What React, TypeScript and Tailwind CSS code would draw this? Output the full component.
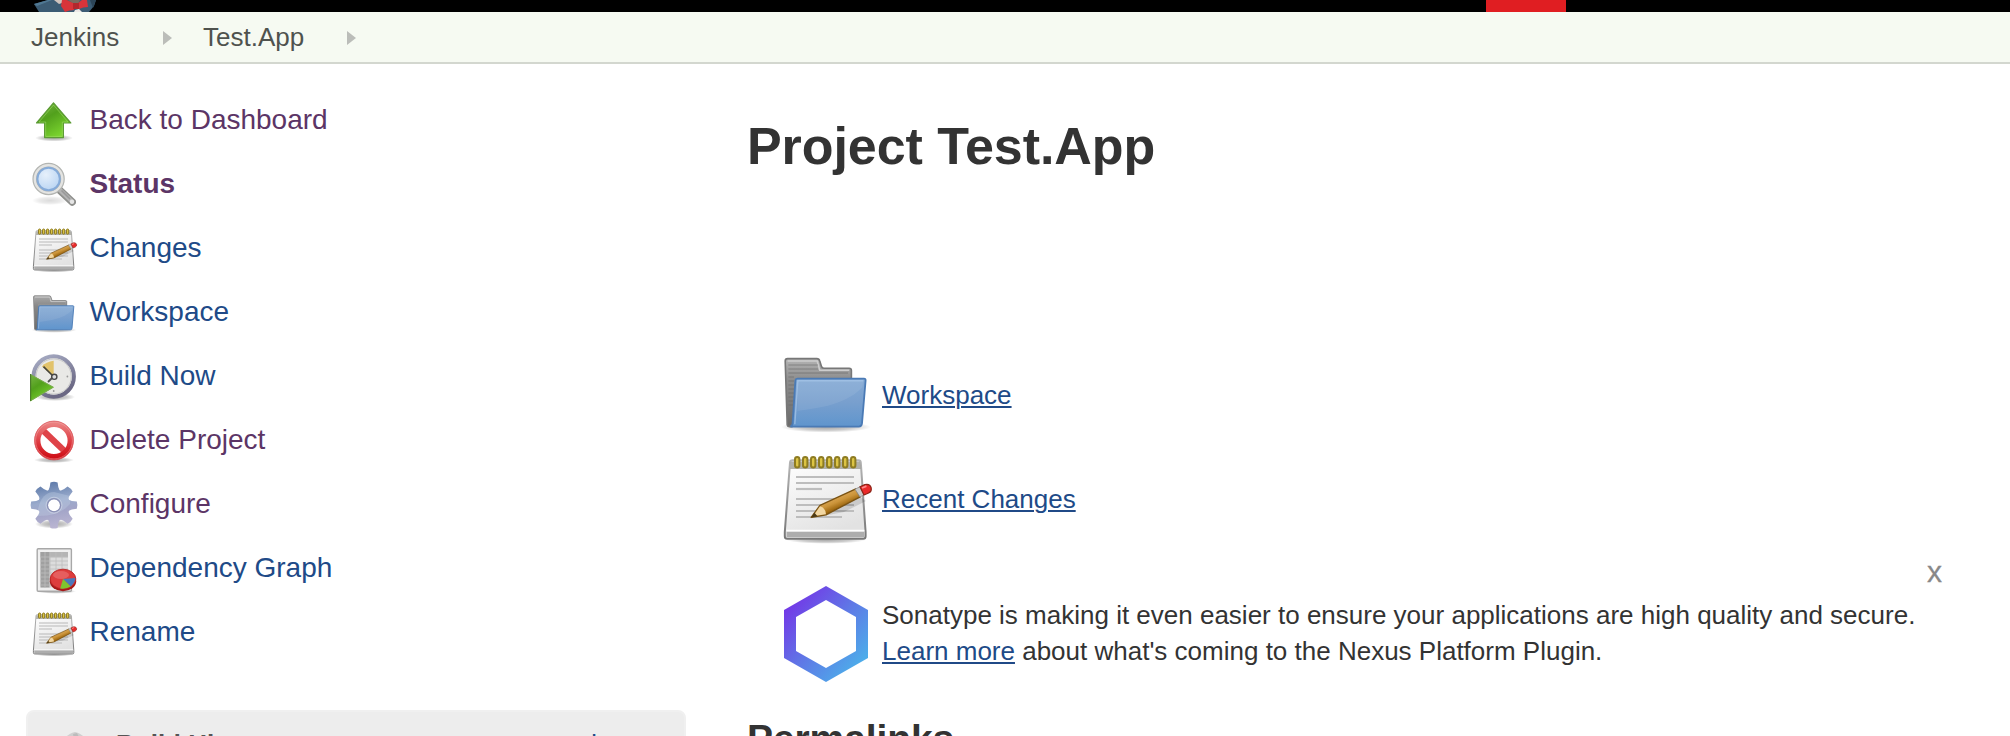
import type { ComponentType, ReactNode } from "react";

type IconProps = { className?: string };

function Svg({ className = "size-12", children }: { className?: string; children: ReactNode }) {
  return (
    <svg viewBox="0 0 48 48" className={`block shrink-0 overflow-visible ${className}`} fill="none">
      {children}
    </svg>
  );
}

function Gradients() {
  return (
    <svg width="0" height="0" className="absolute">
      <defs>
        <radialGradient id="shadow">
          <stop offset="0" stopColor="#000" stopOpacity="0.35" />
          <stop offset="0.6" stopColor="#000" stopOpacity="0.2" />
          <stop offset="1" stopColor="#000" stopOpacity="0" />
        </radialGradient>
        <linearGradient id="green" x1="0" y1="0" x2="0.6" y2="1">
          <stop offset="0" stopColor="#7ab648" />
          <stop offset="0.45" stopColor="#52a01c" />
          <stop offset="1" stopColor="#7bd52f" />
        </linearGradient>
        <linearGradient id="paper" x1="0" y1="0" x2="0.4" y2="1">
          <stop offset="0" stopColor="#fff" />
          <stop offset="1" stopColor="#e2e2e2" />
        </linearGradient>
        <linearGradient id="paperEdge" x1="0" y1="0" x2="0" y2="1">
          <stop offset="0" stopColor="#b5b5b5" />
          <stop offset="1" stopColor="#777" />
        </linearGradient>
        <linearGradient id="folderBack" x1="0" y1="0" x2="0" y2="1">
          <stop offset="0" stopColor="#b4b4b4" />
          <stop offset="0.3" stopColor="#8e8e8e" />
          <stop offset="1" stopColor="#6b6b6b" />
        </linearGradient>
        <linearGradient id="folderFront" x1="0" y1="0" x2="0" y2="1">
          <stop offset="0" stopColor="#86abd5" />
          <stop offset="0.5" stopColor="#789fce" />
          <stop offset="1" stopColor="#5f95cd" />
        </linearGradient>
        <radialGradient id="lens" cx="0.4" cy="0.35" r="0.7">
          <stop offset="0" stopColor="#e6f0fb" />
          <stop offset="1" stopColor="#b3d0f1" />
        </radialGradient>
        <linearGradient id="red" x1="0" y1="0" x2="0" y2="1">
          <stop offset="0" stopColor="#ea8080" />
          <stop offset="0.55" stopColor="#de3a40" />
          <stop offset="1" stopColor="#cf1018" />
        </linearGradient>
        <linearGradient id="gear" x1="0.4" y1="0" x2="0.6" y2="1">
          <stop offset="0" stopColor="#5b78a8" />
          <stop offset="0.4" stopColor="#9aabcc" />
          <stop offset="0.62" stopColor="#a3a5c8" />
          <stop offset="1" stopColor="#c0b9d4" />
        </linearGradient>
        <linearGradient id="clockRim" x1="0" y1="0" x2="0.5" y2="1">
          <stop offset="0" stopColor="#a9aec6" />
          <stop offset="1" stopColor="#6b6884" />
        </linearGradient>
        <linearGradient id="hex" x1="0.1" y1="0.1" x2="0.9" y2="0.9">
          <stop offset="0" stopColor="#7434e7" />
          <stop offset="0.5" stopColor="#5f78e6" />
          <stop offset="1" stopColor="#4bb2ea" />
        </linearGradient>
        <linearGradient id="pencil" gradientUnits="userSpaceOnUse" x1="28" y1="22" x2="31" y2="29">
          <stop offset="0" stopColor="#e0ac5c" />
          <stop offset="0.5" stopColor="#cb943a" />
          <stop offset="1" stopColor="#8f5902" />
        </linearGradient>
      </defs>
    </svg>
  );
}

function UpIcon({ className }: IconProps) {
  return (
    <Svg className={className}>
      <ellipse cx="24" cy="40" rx="19" ry="3.5" fill="url(#shadow)" />
      <path d="M23.5 4.8 L40.8 25 H33.4 V39.6 H14.6 V25 H6.5 Z" fill="url(#green)" stroke="#5c9b35" strokeWidth="1.2" strokeLinejoin="round" />
      <path d="M23.5 7 L38 24 H32.3 V38.4 H15.7 V24 H9 Z" stroke="#a5e070" strokeOpacity="0.5" strokeWidth="1" />
    </Svg>
  );
}

function SearchIcon({ className }: IconProps) {
  return (
    <Svg className={className}>
      <ellipse cx="20" cy="38.5" rx="18" ry="4.5" fill="url(#shadow)" opacity="0.4" />
      <path d="M30 28.5 L42.3 40" stroke="#8f908d" strokeWidth="7.4" strokeLinecap="round" />
      <path d="M30.5 28.7 L42 39.5" stroke="#b4b4b4" strokeWidth="4.4" strokeLinecap="round" />
      <path d="M31.5 28.5 L40 37" stroke="#999" strokeWidth="1.6" />
      <circle cx="42" cy="39.8" r="2.2" fill="#e6e6e6" />
      <circle cx="18.6" cy="17" r="13.8" fill="url(#lens)" stroke="#b3b5b2" strokeWidth="4.8" />
      <circle cx="18.6" cy="17" r="13.8" stroke="#e4e4e2" strokeWidth="2.4" />
      <circle cx="18.6" cy="17" r="11.2" stroke="#86abd9" strokeWidth="2" />
    </Svg>
  );
}

const RINGS = [9.5, 13.5, 17.5, 21.5, 25.5, 29.5, 33.5, 37.5];
const RULES: [number, number][] = [[13, 38], [16, 38], [19, 22], [24, 38], [27, 38], [30, 38], [33, 32]];

function NotepadIcon({ className }: IconProps) {
  return (
    <Svg className={className}>
      <ellipse cx="24" cy="44.4" rx="20" ry="2" fill="url(#shadow)" />
      <path d="M7.2 4.6 H40.2 Q41.3 4.6 41.4 5.8 L43.8 40.5 V42.6 Q43.8 43.9 42.6 43.9 H4.6 Q3.4 43.9 3.4 42.6 V40.5 L6 5.8 Q6.1 4.6 7.2 4.6 Z" fill="url(#paper)" stroke="url(#paperEdge)" strokeWidth="1" />
      <path d="M6.4 5.2 H41 L41.4 9 H6.1 Z" fill="#9a9a90" fillOpacity="0.75" />
      <path d="M4.3 40.2 H43 V43 H4.3 Z" fill="#adadad" />
      <path d="M4.2 39.8 H43.2" stroke="#fff" strokeWidth="0.8" />
      {RULES.map(([y, x]) => (
        <path key={y} d={`M9 ${y} H${x}`} stroke="#bdbdbd" strokeWidth="1.1" />
      ))}
      {RINGS.map((x) => (
        <rect key={x} x={x - 1} y="3" width="2.2" height="5.2" rx="1.1" fill="#dcc444" stroke="#8e7c22" strokeWidth="1" />
      ))}
      <path d="M16 33.8 L33 30.5 L44 25 L40 22 Z" fill="#000" opacity="0.13" />
      <path d="M16.6 33.2 L21 27.2 L38.9 18.9 L41.1 22.9 L24 31.9 Z" fill="url(#pencil)" stroke="#7a5313" strokeWidth="0.7" strokeLinejoin="round" />
      <path d="M17.6 32.6 L21 27.6 Q23.6 28.2 24 31.6 Z" fill="#f2d7a2" />
      <path d="M16.6 33.2 L18.2 30.9 L19.8 32.6 Z" fill="#4b3a17" />
      <path d="M38.5 19.1 L41 17.9 L43 21.9 L41 23 Z" fill="#c9c9c9" stroke="#8c8c8c" strokeWidth="0.4" />
      <path d="M41 17.9 L43.4 16.8 Q46 16.2 46.6 18.5 Q46.9 20.3 45.3 21 L43 22 Z" fill="#ea2a2a" stroke="#8d2417" strokeWidth="0.6" />
      <path d="M42 18.5 L44.2 17.6" stroke="#ff8a8a" strokeWidth="0.9" />
    </Svg>
  );
}

function FolderIcon({ className }: IconProps) {
  return (
    <Svg className={className}>
      <ellipse cx="24" cy="40" rx="22.5" ry="2.8" fill="url(#shadow)" />
      <path d="M3.6 7 Q3.6 5.8 4.8 5.8 H19.4 Q20.6 5.8 20.9 7 L21.7 9.6 Q22 10.6 23 10.6 H35.6 Q36.7 10.6 36.7 11.7 V20 L7 39.8 H5.6 Q4.7 39.8 4.6 39 Z" fill="url(#folderBack)" stroke="#777" strokeWidth="0.8" />
      <path d="M4.8 7 H19.6 L20.9 11.6 H35.6" stroke="#cdcdcd" strokeWidth="0.8" />
      {[9, 11, 13, 15, 17, 19, 21, 23, 25, 27, 29].map((y) => (
        <path key={y} d={`M5.2 ${y} H${y < 12 ? 20 : y < 15 ? 35 : 8}`} stroke="#666" strokeOpacity="0.4" strokeWidth="0.7" />
      ))}
      <path d="M9.6 15.8 H43 Q43.9 15.8 43.8 16.7 L42 38.2 Q41.8 39.8 40.4 39.8 H6.2 Q7.2 39.4 7.3 38.2 L8.7 16.7 Q8.8 15.8 9.6 15.8 Z" fill="url(#folderFront)" stroke="#4a7ab5" strokeWidth="0.9" />
      <path d="M9.7 32 Q16 31.2 22 30 Q36 27 42.2 20 L42.6 17 H9.9 Z" fill="#fff" fillOpacity="0.08" />
      <path d="M8.4 38.6 L9.9 16.9 H42.7" stroke="#a9c8ea" strokeOpacity="0.7" strokeWidth="0.7" />
    </Svg>
  );
}

function BuildIcon({ className }: IconProps) {
  return (
    <Svg className={className}>
      <ellipse cx="25" cy="43" rx="20" ry="4" fill="url(#shadow)" />
      <circle cx="23.7" cy="22.5" r="20.2" fill="#e9e9e6" stroke="url(#clockRim)" strokeWidth="4" />
      <circle cx="23.7" cy="22.5" r="17.6" stroke="#c9c9c9" strokeWidth="1" />
      <path d="M23.7 22.5 L11.8 12.4 Q16 7.8 23.7 6.8 Z" fill="#e2c36b" />
      <path d="M24 23 L13.5 12.6" stroke="#45443a" strokeWidth="1.6" />
      <path d="M24 22 L18 28" stroke="#555" strokeWidth="1.8" />
      <circle cx="24.3" cy="22.8" r="2.6" fill="#ddd" stroke="#484848" strokeWidth="1.4" />
      <circle cx="37.4" cy="22.5" r="0.9" fill="#999" />
      <circle cx="23.7" cy="37" r="0.9" fill="#999" />
      <path d="M0.2 20 L24 33.2 L0.2 47.4 Z" fill="url(#green)" />
      <path d="M0.5 20.5 L23.2 33.2 L0.5 46.6" stroke="#7cab52" strokeWidth="1" />
      <path d="M0.6 20 V47" stroke="#4b7c2b" strokeWidth="1.2" />
    </Svg>
  );
}

function DeleteIcon({ className }: IconProps) {
  return (
    <Svg className={className}>
      <ellipse cx="24" cy="42" rx="20" ry="3" fill="url(#shadow)" />
      <circle cx="24" cy="22.5" r="16.4" fill="#fff" />
      <path d="M12 11.5 L36 34.5" stroke="#df4348" strokeWidth="6.4" />
      <circle cx="24" cy="22.5" r="16.6" stroke="url(#red)" strokeWidth="6" />
      <circle cx="24" cy="22.5" r="19.4" stroke="#d95a5f" strokeWidth="0.8" />
      <circle cx="24" cy="22.5" r="18.4" stroke="#f7b5b5" strokeOpacity="0.6" strokeWidth="0.7" />
    </Svg>
  );
}

const TEETH = [0, 45, 90, 135, 180, 225, 270, 315];

function GearIcon({ className }: IconProps) {
  return (
    <Svg className={className}>
      <ellipse cx="24" cy="42" rx="19" ry="4.5" fill="url(#shadow)" />
      <mask id="gearMask" maskUnits="userSpaceOnUse" x="-2" y="-2" width="52" height="52">
        <circle cx="24" cy="23.2" r="16" fill="#fff" />
        {TEETH.map((a) => (
          <path key={a} d="M18.2 9 Q20 6 20.4 0.4 Q24 -0.8 27.6 0.4 Q28 6 29.8 9 Z" fill="#fff" transform={`rotate(${a} 24 23.2)`} />
        ))}
        <circle cx="24" cy="23.2" r="6" fill="#000" />
      </mask>
      <circle cx="24" cy="23.2" r="7" fill="#fff" />
      <g mask="url(#gearMask)">
        <rect x="-1" y="-1" width="50" height="50" fill="url(#gear)" />
        <path d="M8 27 Q12 10 24 10 L40 14 V22 Q30 34 8 34 Z" fill="#c3d0e6" fillOpacity="0.35" />
      </g>
      <circle cx="24" cy="23.2" r="6.6" stroke="#8b90b5" strokeWidth="1.2" />
      <circle cx="24" cy="23.2" r="8" stroke="#d3daea" strokeOpacity="0.6" strokeWidth="1" />
    </Svg>
  );
}

function GraphIcon({ className }: IconProps) {
  return (
    <Svg className={className}>
      <ellipse cx="26" cy="45.4" rx="20" ry="2.4" fill="url(#shadow)" />
      <rect x="7.2" y="2.8" width="34.2" height="42.4" rx="1" fill="#f0f0f0" stroke="#a8a8a8" strokeWidth="1.4" />
      <rect x="10.5" y="6" width="27.5" height="35.5" fill="#dcdcdc" />
      <rect x="10.5" y="6" width="27.5" height="5.2" fill="#b5b5b5" />
      <rect x="10.5" y="6" width="9" height="35.5" fill="#a0a0a0" />
      {[11, 15, 19, 23, 27, 31, 35, 39].map((y) => (
        <path key={y} d={`M10.5 ${y} H38`} stroke="#bdbdbd" strokeWidth="0.8" />
      ))}
      {[15, 20, 26, 32].map((x) => (
        <path key={x} d={`M${x} 6 V41.5`} stroke="#bdbdbd" strokeWidth="0.8" />
      ))}
      <ellipse cx="33" cy="35.2" rx="13.2" ry="10" fill="#a51a1a" />
      <ellipse cx="33" cy="33" rx="12.8" ry="9.8" fill="#dd3d3d" stroke="#bb2525" strokeWidth="0.9" />
      <ellipse cx="31" cy="29" rx="8" ry="4" fill="#f08080" fillOpacity="0.5" />
      <path d="M33 33 L45.4 32 Q45.5 36 40.8 40.4 Z" fill="#4a79bd" />
      <path d="M33 33 L40.8 40.6 Q36 43.4 30.2 42.4 Z" fill="#7fc52f" />
    </Svg>
  );
}

function HexagonLogo() {
  return (
    <svg viewBox="0 0 84 96" className="block h-24 w-21 shrink-0">
      <path fillRule="evenodd" fill="url(#hex)" d="M42 0 L84 24 V72 L42 96 L0 72 V24 Z M42 14 L12 31 V65 L42 82 L72 65 V31 Z" />
    </svg>
  );
}

function ButlerLogo() {
  return (
    <svg viewBox="0 0 66 12" className="block h-3 w-[66px]">
      <path d="M1 4 L15 0 H63 L61 6 L56 12 H6 Z" fill="#3c5c74" />
      <path d="M1 4 L15 0 H19 L4 6 Z" fill="#4f7893" />
      <path d="M21 0 H29 V3 L26 4 Z" fill="#cfc3bd" />
      <path d="M35 0 H47 L45 4 H41 Z" fill="#7a6a5e" />
      <path d="M29 0 H34 L42 4 L41 10 Q36 10 32 12 L28 6 Z" fill="#d8343a" />
      <path d="M45 3 L49 0 H54 L55 7 Q50 7 46 9 Z" fill="#d8343a" />
      <path d="M40 3 H46 V9 H40 Z" fill="#b3272d" />
      <path d="M42 10 L46 9 L49 12 H41 Z" fill="#ece8e6" />
      <path d="M57 0 H63 L60 8 Z" fill="#2c4558" />
    </svg>
  );
}

function Separator({ className }: IconProps) {
  return (
    <svg viewBox="0 0 9 14" className={`block h-3.5 w-[9px] ${className}`}>
      <path d="M0 0 L9 7 L0 14 Z" fill="#bbbdb9" />
    </svg>
  );
}

type Task = { label: string; icon: ComponentType<IconProps>; tone: string };

const TASKS: Task[] = [
  { label: "Back to Dashboard", icon: UpIcon, tone: "text-[#5c3566]" },
  { label: "Status", icon: SearchIcon, tone: "font-bold text-[#5c3566]" },
  { label: "Changes", icon: NotepadIcon, tone: "text-[#204a87]" },
  { label: "Workspace", icon: FolderIcon, tone: "text-[#204a87]" },
  { label: "Build Now", icon: BuildIcon, tone: "text-[#204a87]" },
  { label: "Delete Project", icon: DeleteIcon, tone: "text-[#5c3566]" },
  { label: "Configure", icon: GearIcon, tone: "text-[#5c3566]" },
  { label: "Dependency Graph", icon: GraphIcon, tone: "text-[#204a87]" },
  { label: "Rename", icon: NotepadIcon, tone: "text-[#204a87]" },
];

const LINK = "text-[#204a87] underline decoration-2 underline-offset-2";

export default function App() {
  return (
    <div className="flex h-[736px] w-[2010px] flex-col overflow-hidden bg-white font-['Liberation_Sans',Arial,sans-serif] text-[26px] text-[#333]">
      <Gradients />
      <header className="flex h-3 shrink-0 bg-black pl-[33px]">
        <ButlerLogo />
        <div className="ml-[1387px] h-3 w-20 bg-[#e01e22]" />
      </header>

      <nav className="flex h-13 shrink-0 items-center border-b-2 border-[#d3d7cf] bg-[#f6faf2] pl-[31px] leading-[30px] text-[#4f524e]">
        <a className="w-[132px]">Jenkins</a>
        <Separator className="mt-0.5" />
        <a className="ml-[31px] w-36">Test.App</a>
        <Separator className="mt-0.5" />
      </nav>

      <div className="flex min-h-0 grow">
        <aside className="flex w-[686px] shrink-0 flex-col pt-[34px] pl-[26px]">
          <ul className="flex flex-col gap-4 pl-1">
            {TASKS.map(({ label, icon: Icon, tone }) => (
              <li key={label} className="flex h-12 items-center">
                <Icon className="size-12 blur-[0.6px]" />
                <a className={`-mt-1 ml-[11.5px] text-[28px] leading-8 ${tone}`}>{label}</a>
              </li>
            ))}
          </ul>
          <section className="mt-[52px] flex h-24 shrink-0 items-start rounded-lg border-2 border-[#f0f0f0] bg-[#ededed] pt-[17px] pl-9">
            <svg viewBox="0 0 24 24" className="mt-[3px] block size-6 blur-[0.6px]">
              <path d="M0 7 Q5 1 11 0 Q17 1 22 7 L12 24 Z" fill="#d0d0d0" />
              <path d="M9 2 L13 1 L15 5 L10 7 Z" fill="#bcbcbc" />
            </svg>
            <h2 className="ml-7 leading-[30px] font-bold text-[#555]">Build History</h2>
            <a className="ml-[260px] leading-[30px] text-[#204a87]">trend</a>
          </section>
        </aside>

        <main className="flex grow flex-col pl-[61px]">
          <h1 className="mt-[52px] text-[52px] leading-[60px] font-bold tracking-[-0.07px]">Project Test.App</h1>
          <div className="mt-[171px] flex flex-col gap-2 pl-[31px]">
            <div className="flex h-24 items-center">
              <FolderIcon className="size-24" />
              <a className={`ml-2 leading-[30px] ${LINK}`}>Workspace</a>
            </div>
            <div className="flex h-24 items-center">
              <NotepadIcon className="size-24" />
              <a className={`ml-2 leading-[30px] ${LINK}`}>Recent Changes</a>
            </div>
          </div>
          <div className="mt-[11px] flex items-start pl-[37px]">
            <div className="pt-7">
              <HexagonLogo />
            </div>
            <p className="mt-[39px] ml-3.5 w-[1040px] leading-9">
              Sonatype is making it even easier to ensure your applications are high quality and secure.
              <br />
              <a className={LINK}>Learn more</a> about what's coming to the Nexus Platform Plugin.
            </p>
            <button className="-mt-[3px] ml-[5px] text-[30px] leading-[34px] text-[#888] [-webkit-text-stroke:0.3px_#888]">x</button>
          </div>
          <h2 className="mt-[35px] text-[39px] leading-[44px] font-bold tracking-[-0.1px]">Permalinks</h2>
        </main>
      </div>
    </div>
  );
}
